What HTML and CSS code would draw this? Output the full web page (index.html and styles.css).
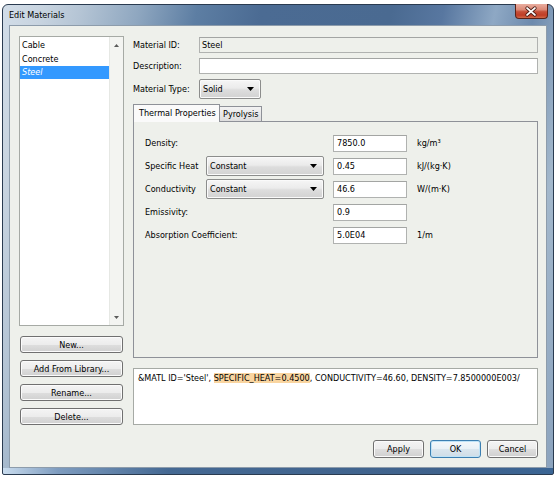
FILE: index.html
```html
<!DOCTYPE html>
<html>
<head>
<meta charset="utf-8">
<title>Edit Materials</title>
<link rel="stylesheet" href="styles.css">
</head>
<body>
<div class="window">
  <div class="titlebar">
    <span class="title">Edit Materials</span>
    <div class="close-btn">
      <svg width="33" height="15" viewBox="0 0 33 15">
        <path d="M12.5 4 L20.5 11 M20.5 4 L12.5 11" stroke="#4a1a12" stroke-width="3.6" stroke-linecap="round" fill="none"/>
        <path d="M12.5 4 L20.5 11 M20.5 4 L12.5 11" stroke="#ffffff" stroke-width="2" stroke-linecap="round" fill="none"/>
      </svg>
    </div>
  </div>
  <div class="client">
    <div class="main">
      <div class="left">
        <div class="listbox">
          <ul class="items">
            <li>Cable</li>
            <li>Concrete</li>
            <li class="sel">Steel</li>
          </ul>
          <div class="vscroll">
            <div class="sarrow"><svg width="5" height="3" viewBox="0 0 5 3"><path d="M0 3 L2.5 0 L5 3 Z" fill="#5a5a5a"/></svg></div>
            <div class="sarrow"><svg width="5" height="3" viewBox="0 0 5 3"><path d="M0 0 L5 0 L2.5 3 Z" fill="#5a5a5a"/></svg></div>
          </div>
        </div>
        <div class="left-buttons">
          <button class="btn wide">New...</button>
          <button class="btn wide">Add From Library...</button>
          <button class="btn wide">Rename...</button>
          <button class="btn wide">Delete...</button>
        </div>
      </div>
      <div class="right">
        <div class="row">
          <span class="lbl">Material ID:</span>
          <div class="field readonly">Steel</div>
        </div>
        <div class="row">
          <span class="lbl">Description:</span>
          <div class="field"></div>
        </div>
        <div class="row row-combo">
          <span class="lbl">Material Type:</span>
          <div class="combo type-combo"><span>Solid</span><svg width="7" height="4" viewBox="0 0 7 4"><path d="M0 0 L7 0 L3.5 4 Z" fill="#000"/></svg></div>
        </div>
        <div class="tabs">
          <div class="tab active">Thermal Properties</div>
          <div class="tab">Pyrolysis</div>
        </div>
        <div class="panel">
          <div class="props">
            <span class="plbl span2">Density:</span>
            <div class="pfield">7850.0</div>
            <span class="unit">kg/m³</span>

            <span class="plbl">Specific Heat</span>
            <div class="combo"><span>Constant</span><svg width="7" height="4" viewBox="0 0 7 4"><path d="M0 0 L7 0 L3.5 4 Z" fill="#000"/></svg></div>
            <div class="pfield">0.45</div>
            <span class="unit">kJ/(kg·K)</span>

            <span class="plbl">Conductivity</span>
            <div class="combo"><span>Constant</span><svg width="7" height="4" viewBox="0 0 7 4"><path d="M0 0 L7 0 L3.5 4 Z" fill="#000"/></svg></div>
            <div class="pfield">46.6</div>
            <span class="unit">W/(m·K)</span>

            <span class="plbl span2">Emissivity:</span>
            <div class="pfield">0.9</div>
            <span class="unit"></span>

            <span class="plbl span2">Absorption Coefficient:</span>
            <div class="pfield">5.0E04</div>
            <span class="unit">1/m</span>
          </div>
        </div>
        <div class="code">&amp;MATL ID='Steel', <span class="hl">SPECIFIC_HEAT=0.4500</span>, CONDUCTIVITY=46.60, DENSITY=7.8500000E003/</div>
      </div>
    </div>
    <div class="dialog-buttons">
      <button class="btn">Apply</button>
      <button class="btn focused">OK</button>
      <button class="btn">Cancel</button>
    </div>
  </div>
</div>
</body>
</html>
```
FILE: styles.css
```css
html, body {
  margin: 0;
  padding: 0;
  background: #ffffff;
}

body {
  font-family: "DejaVu Sans Condensed", "DejaVu Sans", sans-serif;
  font-stretch: condensed;
  font-size: 9px;
  color: #000;
}

.window {
  box-sizing: border-box;
  width: 552px;
  height: 471px;
  margin: 4px 0 0 2px;
  border: 1px solid #2a3b50;
  border-radius: 6px 6px 2px 2px;
  padding: 0 6px 6px 6px;
  display: flex;
  flex-direction: column;
  background:
    linear-gradient(to right, #c9dcee 0%, #7e9cbf 10%, #456993 30%, #3f628c 80%, #3b6594 100%) left bottom / 100% 6px no-repeat,
    linear-gradient(102deg, #d2dde8 0%, #c8d4e0 6%, #b5c5d5 12%, #8fa7c0 21%, #5d7ea3 30%, #4b6b93 40%, #4a6a91 60%, #5877a0 68%, #8ea8c4 76%, #6d8aad 82%, #a3b8cc 90%, #8aa2bd 100%);
}

.titlebar {
  height: 20px;
  display: flex;
  justify-content: space-between;
  align-items: flex-start;
  margin-right: -1px;
}

.title {
  line-height: 21px;
  color: #000;
}

.close-btn {
  width: 33px;
  height: 15px;
  margin-top: -1px;
  box-sizing: border-box;
  border: 1px solid #5a2218;
  border-top: none;
  border-radius: 0 0 4px 4px;
  background: linear-gradient(#e9ad9f 0%, #dc8a78 40%, #c54f38 55%, #c03d26 80%, #d06a4a 100%);
  display: flex;
  align-items: center;
  justify-content: center;
}

.close-btn svg {
  display: block;
  margin-left: -1px;
}

.client {
  flex: 1;
  border: 1px solid #8d9cab;
  background: #eef0eb;
  padding: 10px 8px 9px 9px;
  display: flex;
  flex-direction: column;
}

.main {
  display: flex;
  gap: 9px;
  height: 389px;
}

.left {
  width: 105px;
  display: flex;
  flex-direction: column;
}

.listbox {
  box-sizing: border-box;
  height: 290px;
  border: 1px solid #a6aaa5;
  background: #ffffff;
  display: flex;
}

.items {
  flex: 1;
  list-style: none;
  margin: 0;
  padding: 1px 0 0 0;
}

.items li {
  height: 14px;
  line-height: 14px;
  padding-left: 2px;
}

.items li.sel {
  background: #3399ff;
  color: #ffffff;
  font-style: italic;
  height: 13px;
  line-height: 13px;
}

.vscroll {
  width: 13px;
  border-left: 1px solid #e6e8e4;
  background: #f3f4f1;
  display: flex;
  flex-direction: column;
  justify-content: space-between;
}

.sarrow {
  height: 16px;
  display: flex;
  align-items: center;
  justify-content: center;
}

.sarrow svg {
  display: block;
}

.left-buttons {
  margin-top: 10px;
  display: flex;
  flex-direction: column;
  gap: 7px;
}

.btn {
  box-sizing: border-box;
  height: 17px;
  padding: 0;
  margin: 0;
  border: 1px solid #707070;
  border-radius: 3px;
  background: linear-gradient(#f4f4f4 0%, #ececec 50%, #dedede 51%, #d0d0d0 100%);
  box-shadow: inset 0 0 0 1px #fbfbfb;
  font-family: inherit;
  font-stretch: condensed;
  font-size: 9px;
  color: #000;
  display: flex;
  align-items: center;
  justify-content: center;
}

.btn.wide {
  width: 103px;
  margin-left: 1px;
}

.right {
  flex: 1;
  display: flex;
  flex-direction: column;
  padding-top: 1px;
}

.row {
  display: flex;
  align-items: center;
  height: 16px;
  margin-bottom: 5px;
}

.row-combo {
  height: 20px;
}

.lbl {
  width: 66px;
  flex: none;
}

.field {
  flex: 1;
  box-sizing: border-box;
  height: 16px;
  border: 1px solid #b0b2b0;
  border-top-color: #a3a5a3;
  background: #ffffff;
  padding-left: 2px;
  line-height: 14px;
}

.field.readonly {
  background: #eef0eb;
}

.combo {
  box-sizing: border-box;
  height: 20px;
  border: 1px solid #8c8d8c;
  border-radius: 2px;
  background: linear-gradient(#f6f6f6 0%, #ebebeb 45%, #dddddd 55%, #d2d2d2 100%);
  box-shadow: inset 0 0 0 1px #fafafa;
  display: flex;
  align-items: center;
  justify-content: space-between;
  padding: 0 6px 0 3px;
}

.combo svg {
  display: block;
}

.type-combo {
  width: 62px;
}

.tabs {
  height: 17px;
  display: flex;
  align-items: flex-end;
  position: relative;
  z-index: 1;
}

.tab {
  box-sizing: border-box;
  height: 15px;
  border: 1px solid #8e9198;
  border-bottom: none;
  background: linear-gradient(#f3f3f3, #dedede);
  padding: 0 3px;
  line-height: 14px;
  margin-left: -1px;
}

.tab.active {
  height: 18px;
  width: 87px;
  margin-left: 0;
  margin-bottom: -1px;
  background: #fafafa;
  padding-left: 5px;
  line-height: 17px;
  position: relative;
  z-index: 2;
}

.panel {
  box-sizing: border-box;
  height: 237px;
  border: 1px solid #8e9198;
  background: #eef0eb;
  padding: 11px 0 0 11px;
}

.props {
  display: grid;
  grid-template-columns: 61px 118px 83px 1fr;
  grid-auto-rows: 20px;
  row-gap: 3px;
  align-items: center;
}

.plbl.span2 {
  grid-column: 1 / span 2;
}

.props .combo {
  width: 118px;
}

.pfield {
  grid-column: 3;
  margin-left: 9px;
  width: 74px;
  box-sizing: border-box;
  height: 17px;
  border: 1px solid #b0b2b0;
  border-top-color: #a3a5a3;
  background: #ffffff;
  padding-left: 3px;
  line-height: 15px;
}

.unit {
  padding-left: 10px;
}

.code {
  margin-top: 10px;
  box-sizing: border-box;
  height: 57px;
  border: 1px solid #a6aaa5;
  background: #ffffff;
  padding: 3px 4px;
  line-height: 12px;
  white-space: nowrap;
}

.hl {
  background: #f9d5a0;
}

.dialog-buttons {
  margin-top: 15px;
  display: flex;
  justify-content: flex-end;
  gap: 6px;
}

.dialog-buttons .btn {
  width: 51px;
  height: 18px;
}

.btn.focused {
  border-color: #3c7fb1;
  box-shadow: inset 0 0 0 1px #bfe3f7;
  background: linear-gradient(#f4f8fb 0%, #e9f1f6 50%, #dae6ee 51%, #cfdde7 100%);
}
```
